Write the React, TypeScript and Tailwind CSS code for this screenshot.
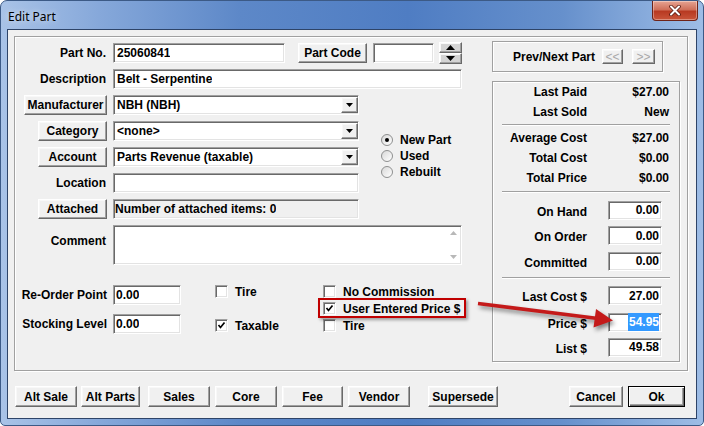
import type { ReactNode } from "react";

const sunken =
  "border border-t-[#a0a0a0] border-l-[#a0a0a0] border-r-white border-b-white shadow-[inset_1px_1px_0_#696969,inset_-1px_-1px_0_#e3e3e3]";
const raised =
  "border border-t-white border-l-white border-r-[#696969] border-b-[#696969] bg-[#f0f0f0] shadow-[inset_-1px_-1px_0_#a0a0a0,inset_1px_1px_0_#f8f8f8]";
const etched =
  "border border-[#a0a0a0] shadow-[inset_1px_1px_0_#ffffff,1px_1px_0_#ffffff]";

const Btn = ({ children, className = "" }: { children: ReactNode; className?: string }) => (
  <div className={`flex h-[20px] shrink-0 items-center justify-center whitespace-nowrap ${raised} ${className}`}>
    {children}
  </div>
);

const Label = ({ children, className = "" }: { children: ReactNode; className?: string }) => (
  <div className={`w-[92px] shrink-0 whitespace-nowrap pr-[1px] text-right ${className}`}>{children}</div>
);

const BtnLabel = ({ children, className = "" }: { children: ReactNode; className?: string }) => (
  <div className="flex w-[92px] shrink-0 justify-end">
    <Btn className={className}>{children}</Btn>
  </div>
);

const Input = ({ children, className = "" }: { children?: ReactNode; className?: string }) => (
  <div className={`flex h-[20px] shrink-0 items-center bg-white pl-[3px] ${sunken} ${className}`}>
    <span className="truncate">{children}</span>
  </div>
);

const Select = ({ value }: { value: string }) => (
  <div className={`flex h-[20px] w-[246px] items-center bg-white pl-[3px] ${sunken}`}>
    <span className="flex-1 truncate">{value}</span>
    <div className={`flex h-[16px] w-[17px] items-center justify-center ${raised}`}>
      <svg width="7" height="4" viewBox="0 0 7 4">
        <path d="M0 0H7L3.5 4Z" fill="#000" />
      </svg>
    </div>
  </div>
);

const Check = ({ checked }: { checked?: boolean }) => (
  <div className={`flex h-[13px] w-[13px] shrink-0 items-center justify-center bg-white ${sunken}`}>
    {checked && (
      <svg width="9" height="9" viewBox="0 0 9 9">
        <path d="M1.5 4 L3.5 6.5 L7.5 1.5" fill="none" stroke="#000" strokeWidth="1.7" />
      </svg>
    )}
  </div>
);

const CheckRow = ({ label, checked }: { label: string; checked?: boolean }) => (
  <div className="flex h-[17px] items-center">
    <Check checked={checked} />
    <span className="ml-[7px] whitespace-nowrap">{label}</span>
  </div>
);

const Radio = ({ on }: { on?: boolean }) => (
  <div className="flex h-[12px] w-[12px] shrink-0 items-center justify-center rounded-full border border-[#8e8f8f] bg-[linear-gradient(135deg,#d8d8d8,#ffffff)]">
    {on && <div className="h-[4px] w-[4px] rounded-full bg-black" />}
  </div>
);

const Sep = () => (
  <div className="flex h-full items-center px-[9px]">
    <div className="h-[2px] w-full border-t border-b border-t-[#a0a0a0] border-b-white" />
  </div>
);

const StatRow = ({ label, value, className = "" }: { label: string; value: string; className?: string }) => (
  <div className={`flex items-center ${className}`}>
    <div className="w-[94px] whitespace-nowrap text-right">{label}</div>
    <div className="w-[82px] text-right">{value}</div>
  </div>
);

const StatInput = ({ label, value, className = "", selected }: { label: string; value: string; className?: string; selected?: boolean }) => (
  <div className={`flex items-center ${className}`}>
    <div className="w-[94px] whitespace-nowrap pt-[3px] text-right">{label}</div>
    <div className={`ml-[21px] flex h-[19px] w-[54px] items-center justify-end bg-white pr-[2px] ${sunken}`}>
      {selected ? <span className="bg-[#3399ff] pl-[1px] text-white">{value}</span> : <span>{value}</span>}
    </div>
  </div>
);

export default function App() {
  return (
    <div className="relative h-[426px] w-[704px] overflow-hidden bg-white font-['Liberation_Sans',Arial,sans-serif] text-[12px] font-bold text-black">
      <div className="flex h-[426px] w-[704px] flex-col rounded-t-[7px] rounded-b-[5px] border border-[#3c5a86] bg-[linear-gradient(90deg,#a9c3e7_0%,#86a8da_14%,#5d88c8_34%,#4f7dc3_58%,#6690cc_80%,#9ebde6_100%)]">
        {/* title bar */}
        <div className="flex h-[28px] items-start">
          <span className="mt-[7px] ml-[7px] font-['Noto_Sans',sans-serif] text-[12px] font-normal text-black [text-shadow:0_0_6px_rgba(255,255,255,0.8)]">
            Edit Part
          </span>
          <div className="ml-auto mr-[5px] flex h-[20px] w-[46px] items-center justify-center rounded-b-[4px] border border-t-0 border-[#6e2318] bg-[linear-gradient(180deg,#e6a493_0%,#d0705a_45%,#b83a22_55%,#c9553a_100%)] shadow-[inset_0_0_0_1px_rgba(255,255,255,0.35)]">
            <svg width="12" height="11" viewBox="0 0 12 11">
              <path d="M2 1.5 L10 9.5 M10 1.5 L2 9.5" stroke="#5a1a10" strokeWidth="3.6" strokeLinecap="round" />
              <path d="M2 1.5 L10 9.5 M10 1.5 L2 9.5" stroke="#ffffff" strokeWidth="2" strokeLinecap="round" />
            </svg>
          </div>
        </div>

        {/* client area */}
        <div className="mx-[6px] mb-[6px] flex flex-1 flex-col border border-[#2e4468] bg-[#f0f0f0] pt-[6px] pl-[6px]">
          {/* main group */}
          <div className={`flex h-[335px] w-[674px] ${etched}`}>
            {/* left panel */}
            <div className="flex w-[477px] shrink-0 flex-col pt-[6px]">
              <div className="flex h-[20px] items-center">
                <Label>Part No.</Label>
                <Input className="ml-[6px] w-[172px]">25060841</Input>
                <Btn className="ml-[13px] w-[69px]">Part Code</Btn>
                <Input className="ml-[6px] w-[61px]" />
                <div className="ml-[5px] flex h-[22px] w-[23px] flex-col">
                  <div className={`flex h-[11px] items-center justify-center bg-[#d6d6d6] ${raised} !bg-[#d4d4d4]`}>
                    <svg width="9" height="5" viewBox="0 0 9 5">
                      <path d="M0 5H9L4.5 0Z" fill="#000" />
                    </svg>
                  </div>
                  <div className={`flex h-[11px] items-center justify-center ${raised} !bg-[#d4d4d4]`}>
                    <svg width="9" height="5" viewBox="0 0 9 5">
                      <path d="M0 0H9L4.5 5Z" fill="#000" />
                    </svg>
                  </div>
                </div>
              </div>

              <div className="mt-[6px] flex h-[20px] items-center">
                <Label>Description</Label>
                <Input className="ml-[6px] w-[349px]">Belt - Serpentine</Input>
              </div>

              <div className="mt-[6px] flex">
                <div className="flex flex-col gap-[6px]">
                  <div className="flex h-[20px] items-center">
                    <BtnLabel className="w-[83px]">Manufacturer</BtnLabel>
                    <div className="ml-[6px]">
                      <Select value="NBH (NBH)" />
                    </div>
                  </div>
                  <div className="flex h-[20px] items-center">
                    <BtnLabel className="w-[69px]">Category</BtnLabel>
                    <div className="ml-[6px]">
                      <Select value="<none>" />
                    </div>
                  </div>
                  <div className="flex h-[20px] items-center">
                    <BtnLabel className="w-[69px]">Account</BtnLabel>
                    <div className="ml-[6px]">
                      <Select value="Parts Revenue (taxable)" />
                    </div>
                  </div>
                  <div className="flex h-[20px] items-center">
                    <Label>Location</Label>
                    <Input className="ml-[6px] w-[246px]" />
                  </div>
                  <div className="flex h-[20px] items-center">
                    <BtnLabel className="w-[69px]">Attached</BtnLabel>
                    <Input className="ml-[6px] w-[246px] !bg-[#f0f0f0] !pl-[1px]">Number of attached items: 0</Input>
                  </div>
                </div>
                <div className="ml-[22px] mt-[36px] flex flex-col">
                  <div className="flex h-[17px] items-center">
                    <Radio on />
                    <span className="ml-[7px]">New Part</span>
                  </div>
                  <div className="flex h-[16px] items-center">
                    <Radio />
                    <span className="ml-[7px]">Used</span>
                  </div>
                  <div className="flex h-[16px] items-center">
                    <Radio />
                    <span className="ml-[7px]">Rebuilt</span>
                  </div>
                </div>
              </div>

              <div className="mt-[6px] flex items-start">
                <Label className="pt-[7px]">Comment</Label>
                <div className={`ml-[6px] flex h-[40px] w-[349px] bg-white ${sunken}`}>
                  <div className="flex-1" />
                  <div className="flex w-[16px] flex-col items-center justify-between py-[5px]">
                    <svg width="7" height="4" viewBox="0 0 7 4">
                      <path d="M0 4H7L3.5 0Z" fill="#b8b8b8" />
                    </svg>
                    <svg width="7" height="4" viewBox="0 0 7 4">
                      <path d="M0 0H7L3.5 4Z" fill="#b8b8b8" />
                    </svg>
                  </div>
                </div>
              </div>

              <div className="mt-[18px] flex">
                <div className="flex flex-col gap-[10px] pt-[2px]">
                  <div className="flex h-[19px] items-center">
                    <Label className="!pr-0">Re-Order Point</Label>
                    <Input className="ml-[6px] h-[19px] w-[68px] !pl-[2px]">0.00</Input>
                  </div>
                  <div className="flex h-[19px] items-center">
                    <Label className="!pr-0">Stocking Level</Label>
                    <Input className="ml-[6px] h-[19px] w-[68px] !pl-[2px]">0.00</Input>
                  </div>
                </div>
                <div className="ml-[34px] flex w-[108px] flex-col">
                  <CheckRow label="Tire" />
                  <div className="h-[17px]" />
                  <CheckRow label="Taxable" checked />
                </div>
                <div className="flex flex-col">
                  <CheckRow label="No Commission" />
                  <div className="relative">
                    <CheckRow label="User Entered Price $" checked />
                    <div className="absolute top-[-2px] left-[-5px] h-[20px] w-[148px] border-2 border-[#c00000] shadow-[2px_2px_3px_rgba(0,0,0,0.35)]" />
                  </div>
                  <CheckRow label="Tire" />
                </div>
              </div>
            </div>

            {/* right panel */}
            <div className="flex w-[188px] shrink-0 flex-col pt-[4px]">
              <div className={`flex h-[31px] w-[171px] items-center justify-end pr-[7px] ${etched}`}>
                <span className="mr-[7px]">Prev/Next Part</span>
                <div className={`flex h-[15px] w-[21px] items-center justify-center font-normal text-[#a8a8a8] ${raised}`}>&lt;&lt;</div>
                <div className={`ml-[9px] flex h-[15px] w-[23px] items-center justify-center font-normal text-[#a8a8a8] ${raised}`}>&gt;&gt;</div>
              </div>
              <div className={`mt-[9px] flex h-[281px] w-[188px] flex-col ${etched}`}>
                <StatRow label="Last Paid" value="$27.00" className="h-[20px]" />
                <StatRow label="Last Sold" value="New" className="h-[20px]" />
                <div className="h-[6px]">
                  <Sep />
                </div>
                <StatRow label="Average Cost" value="$27.00" className="h-[20px]" />
                <StatRow label="Total Cost" value="$0.00" className="h-[20px]" />
                <StatRow label="Total Price" value="$0.00" className="h-[19px]" />
                <div className="h-[10px]">
                  <Sep />
                </div>
                <StatInput label="On Hand" value="0.00" className="h-[26px]" />
                <StatInput label="On Order" value="0.00" className="h-[25px]" />
                <StatInput label="Committed" value="0.00" className="h-[26px]" />
                <div className="h-[8px]">
                  <Sep />
                </div>
                <StatInput label="Last Cost $" value="27.00" className="h-[27px]" />
                <StatInput label="Price $" value="54.95" className="h-[26px]" selected />
                <StatInput label="List $" value="49.58" className="h-[24px]" />
              </div>
            </div>
          </div>

          {/* bottom buttons */}
          <div className="mt-[15px] flex pl-[1px]">
            <Btn className="h-[21px] w-[62px]">Alt Sale</Btn>
            <Btn className="ml-[4px] h-[21px] w-[59px]">Alt Parts</Btn>
            <Btn className="ml-[8px] h-[21px] w-[62px]">Sales</Btn>
            <Btn className="ml-[5px] h-[21px] w-[62px]">Core</Btn>
            <Btn className="ml-[5px] h-[21px] w-[61px]">Fee</Btn>
            <Btn className="ml-[5px] h-[21px] w-[62px]">Vendor</Btn>
            <Btn className="ml-[18px] h-[21px] w-[70px]">Supersede</Btn>
            <Btn className="ml-[71px] h-[21px] w-[54px]">Cancel</Btn>
            <div className="ml-[5px] flex h-[21px] w-[57px] items-center justify-center border border-black bg-[#f0f0f0] shadow-[inset_1px_1px_0_#ffffff,inset_-1px_-1px_0_#696969,inset_-2px_-2px_0_#a0a0a0]">
              Ok
            </div>
          </div>
        </div>
      </div>

      {/* annotation arrow */}
      <svg className="pointer-events-none absolute top-0 left-0 drop-shadow-[2px_3px_2px_rgba(0,0,0,0.45)]" width="704" height="426" viewBox="0 0 704 426">
        <line x1="478" y1="303.5" x2="598" y2="318.5" stroke="#c41a1a" strokeWidth="3.5" />
        <polygon points="596,309 613,320.5 593.5,327.5" fill="#c41a1a" />
      </svg>
    </div>
  );
}
